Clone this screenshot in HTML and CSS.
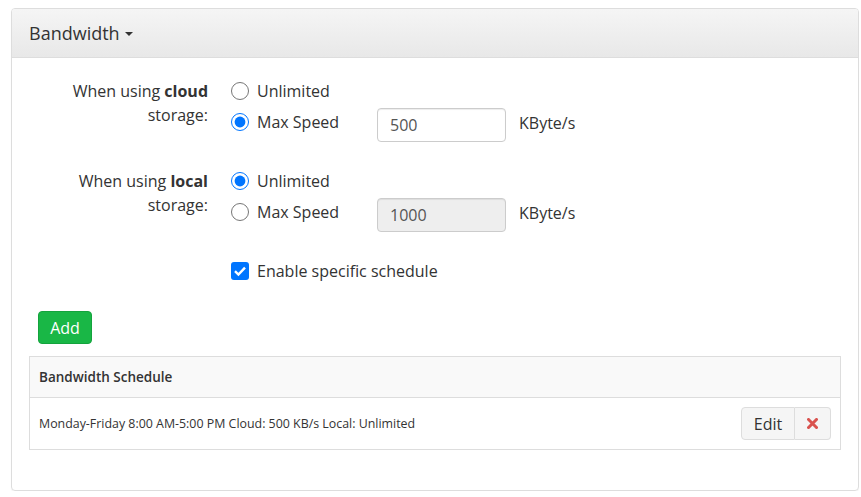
FILE: index.html
```html
<!DOCTYPE html>
<html>
<head>
<meta charset="utf-8">
<link rel="stylesheet" href="styles.css">
</head>
<body>
<div class="panel">
  <div class="panel-heading">Bandwidth <span class="caret"></span></div>
  <div class="panel-body">
    <div class="form-group">
      <div class="label-col">When using <b>cloud</b><br>storage:</div>
      <div class="opts">
        <div class="line">
          <label class="radio"><input type="radio" name="cloud"> Unlimited</label>
        </div>
        <div class="line line-input">
          <label class="radio"><input type="radio" name="cloud" checked> Max Speed</label>
          <input class="text" type="text" value="500">
          <span class="unit">KByte/s</span>
        </div>
      </div>
    </div>
    <div class="form-group">
      <div class="label-col">When using <b>local</b><br>storage:</div>
      <div class="opts">
        <div class="line">
          <label class="radio"><input type="radio" name="local" checked> Unlimited</label>
        </div>
        <div class="line line-input">
          <label class="radio"><input type="radio" name="local"> Max Speed</label>
          <input class="text" type="text" value="1000" disabled>
          <span class="unit">KByte/s</span>
        </div>
      </div>
    </div>
    <div class="form-group">
      <div class="label-col"></div>
      <div class="opts">
        <div class="line">
          <label class="radio"><span class="check"><svg width="18" height="18" viewBox="0 0 18 18"><path d="M4 9.2 L7.4 12.5 L14 5.6" fill="none" stroke="#fff" stroke-width="2.4"/></svg></span>Enable specific schedule</label>
        </div>
      </div>
    </div>
    <button class="btn-add">Add</button>
    <table class="sched">
      <thead><tr><th>Bandwidth Schedule</th></tr></thead>
      <tbody>
        <tr><td>
          <div class="row">
            <span>Monday-Friday 8:00 AM-5:00 PM Cloud: 500 KB/s Local: Unlimited</span>
            <div class="btn-group">
              <button class="btn btn-edit">Edit</button>
              <button class="btn btn-del"><svg width="11" height="11" viewBox="0 0 11 11"><path d="M1.5 1.5 L9.5 9.5 M9.5 1.5 L1.5 9.5" stroke="#d9534f" stroke-width="3" stroke-linecap="square"/></svg></button>
            </div>
          </div>
        </td></tr>
      </tbody>
    </table>
  </div>
</div>
</body>
</html>
```
FILE: styles.css
```css
* { box-sizing: border-box; }
html, body { margin: 0; background: #fff; }
body {
  padding: 8px 3px 0 11px;
  font-family: "Open Sans", "DejaVu Sans", sans-serif;
  color: #333;
  font-size: 16px;
}
.panel {
  width: 848px;
  border: 1px solid #ddd;
  border-radius: 4px;
  box-shadow: 0 1px 1px rgba(0,0,0,0.05);
}
.panel-heading {
  height: 49px;
  padding: 0 17px;
  display: flex;
  align-items: center;
  font-size: 18px;
  background: linear-gradient(to bottom, #f5f5f5, #e8e8e8);
  border-bottom: 1px solid #ddd;
  border-radius: 3px 3px 0 0;
}
.caret {
  display: inline-block;
  margin-left: 5px;
  margin-top: 2px;
  width: 0; height: 0;
  border-left: 4px solid transparent;
  border-right: 4px solid transparent;
  border-top: 4px solid #333;
}
.panel-body {
  padding: 21px 17px 40px;
}
.form-group {
  display: grid;
  grid-template-columns: 179px 1fr;
  column-gap: 23px;
  margin-bottom: 27px;
}
.label-col {
  text-align: right;
  line-height: 24px;
}
.label-col b { font-weight: 700; }
.opts { display: flex; flex-direction: column; gap: 5px; }
.line { display: flex; align-items: flex-start; }
.radio {
  display: flex;
  align-items: center;
  line-height: 24px;
  height: 24px;
  width: 146px;
  white-space: nowrap;
}
.line-input .radio { margin-top: 2px; }
.radio input {
  width: 18px; height: 18px;
  margin: 0 8px 0 0;
}
.check {
  width: 18px; height: 18px;
  margin-right: 8px;
  border-radius: 3px;
  background: #0075ff;
  display: flex;
}
.text {
  width: 129px;
  height: 34px;
  padding: 6px 12px;
  border: 1px solid #ccc;
  border-radius: 4px;
  font-family: inherit;
  font-size: 16px;
  color: #555;
  background: #fff;
  box-shadow: inset 0 1px 1px rgba(0,0,0,0.075);
}
.text:disabled { background: #eee; color: #555; }
.unit { margin: 3px 0 0 13px; line-height: 24px; }
.btn-add {
  display: block;
  margin: 0 0 12px 9px;
  width: 54px;
  height: 33px;
  padding: 0;
  font-family: inherit;
  font-size: 16px;
  color: #fff;
  background: #19b746;
  border: 1px solid #14a33d;
  border-radius: 4px;
}
.form-group:last-of-type { margin-bottom: 28px; }
.sched {
  width: 100%;
  border-collapse: collapse;
  border: 1px solid #ddd;
}
.sched th {
  height: 41px;
  text-align: left;
  padding: 0 9px;
  font-size: 13.5px;
  font-weight: 600;
  background: #f9f9f9;
  border-bottom: 1px solid #ddd;
}
.sched td {
  padding: 9px;
  font-size: 12.4px;
}
.row { display: flex; align-items: center; justify-content: space-between; }
.btn-group { display: flex; }
.btn {
  height: 33px;
  border: 1px solid #ddd;
  background: #f5f5f5;
  font-family: inherit;
  font-size: 16px;
  color: #333;
  padding: 0;
  display: flex; align-items: center; justify-content: center;
}
.btn-edit { width: 54px; border-radius: 4px 0 0 4px; }
.btn-del { width: 36px; border-left: none; border-radius: 0 4px 4px 0; }
```
